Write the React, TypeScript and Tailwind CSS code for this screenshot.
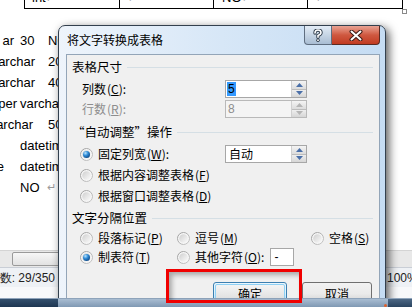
import React from "react";

const cjk = "font-['Noto_Sans_CJK_SC',sans-serif]";

function Radio({ checked }: { checked?: boolean }) {
  return (
    <svg width="13" height="13" viewBox="0 0 13 13" className="shrink-0">
      <defs>
        <linearGradient id="rOuter" x1="0" y1="0" x2="1" y2="1">
          <stop offset="0" stopColor="#9a9a9a" />
          <stop offset="1" stopColor="#c9c9c9" />
        </linearGradient>
        <linearGradient id="rInner" x1="0" y1="0" x2="1" y2="1">
          <stop offset="0" stopColor="#cfcfcf" />
          <stop offset="1" stopColor="#fbfbfb" />
        </linearGradient>
        <radialGradient id="rDot" cx="0.35" cy="0.3" r="0.8">
          <stop offset="0" stopColor="#b9e4ff" />
          <stop offset="0.45" stopColor="#2f8bd6" />
          <stop offset="1" stopColor="#0b3f7a" />
        </radialGradient>
      </defs>
      <circle cx="6.5" cy="6.5" r="6" fill="#f6f6f6" stroke="url(#rOuter)" />
      <circle cx="6.5" cy="6.5" r="4.3" fill="url(#rInner)" />
      {checked && <circle cx="6.5" cy="6.5" r="3.5" fill="url(#rDot)" />}
    </svg>
  );
}

function Spin({ disabled }: { disabled?: boolean }) {
  const arrow = disabled ? "#b5b5b5" : "#4a6fa8";
  return (
    <div className="flex flex-col w-[15px] h-full border-l border-[#d0d0d0]">
      <div className="flex-1 flex items-center justify-center bg-gradient-to-b from-[#f4f4f4] to-[#dcdcdc] border-b border-[#bcbcbc]">
        <svg width="7" height="4" viewBox="0 0 7 4">
          <path d="M0 4 L3.5 0 L7 4 Z" fill={arrow} />
        </svg>
      </div>
      <div className="flex-1 flex items-center justify-center bg-gradient-to-b from-[#eeeeee] to-[#d6d6d6]">
        <svg width="7" height="4" viewBox="0 0 7 4">
          <path d="M0 0 L3.5 4 L7 0 Z" fill={arrow} />
        </svg>
      </div>
    </div>
  );
}

function Key({ k }: { k: string }) {
  return (
    <span className="text-[12px] ml-[1px]">
      (<span className="underline underline-offset-1">{k}</span>)
    </span>
  );
}

function GroupHeader({ label }: { label: string }) {
  return (
    <div className="flex items-center h-[16px] pl-[5px] pr-[6px]">
      <span className="whitespace-nowrap text-[12.5px] leading-none">{label}</span>
      <div className="flex-1 h-px bg-[#d5dfe5] ml-[5px]" />
    </div>
  );
}

function Option({
  checked,
  label,
  k,
  colon,
}: {
  checked?: boolean;
  label: string;
  k: string;
  colon?: boolean;
}) {
  return (
    <div className="flex items-center gap-[5px] whitespace-nowrap">
      <Radio checked={checked} />
      <span className="text-[12px] leading-none">
        {label}
        <Key k={k} />
        {colon ? ":" : ""}
      </span>
    </div>
  );
}

function Dialog() {
  return (
    <div
      className={`absolute left-[58px] top-[25px] w-[328px] h-[282px] flex flex-col rounded-t-[7px] border border-[#33404e] bg-gradient-to-r from-[#eef4fb] via-[#d7e7f7] to-[#c5dcf3] shadow-[3px_3px_10px_rgba(0,0,0,0.65)] ${cjk} text-black`}
    >
      {/* title bar */}
      <div className="flex items-start justify-between h-[28px] shrink-0">
        <div className="pl-[8px] pt-[8px] text-[12px] leading-none">将文字转换成表格</div>
        <div className="flex mr-[5px]">
          <div className="w-[28px] h-[19px] flex items-center justify-center rounded-bl-[4px] border border-t-0 border-[#5f6e80] bg-gradient-to-b from-[#e3ecf6] via-[#c6d5e5] to-[#a9bdd3]">
            <svg width="10" height="13" viewBox="0 0 10 13">
              <path
                d="M2 4 Q2 1 5 1 Q8 1 8 3.6 Q8 5.6 5 6.6 L5 8.3"
                fill="none"
                stroke="#2d3a48"
                strokeWidth="3.4"
                strokeLinecap="round"
              />
              <path
                d="M2 4 Q2 1 5 1 Q8 1 8 3.6 Q8 5.6 5 6.6 L5 8.3"
                fill="none"
                stroke="#ffffff"
                strokeWidth="1.6"
                strokeLinecap="round"
              />
              <circle cx="5" cy="11.2" r="1.7" fill="#2d3a48" />
              <circle cx="5" cy="11.2" r="0.9" fill="#ffffff" />
            </svg>
          </div>
          <div className="w-[48px] h-[19px] flex items-center justify-center rounded-br-[4px] border border-t-0 border-l-0 border-[#5a2a22] bg-gradient-to-b from-[#e8a293] via-[#cf5840] to-[#c13a20]">
            <svg width="14" height="11" viewBox="0 0 14 11">
              <path d="M2.5 1.5 L11.5 9.5 M11.5 1.5 L2.5 9.5" stroke="#3a1a14" strokeWidth="4" strokeLinecap="round" />
              <path d="M2.5 1.5 L11.5 9.5 M11.5 1.5 L2.5 9.5" stroke="#ffffff" strokeWidth="2" strokeLinecap="round" />
            </svg>
          </div>
        </div>
      </div>

      {/* client area */}
      <div className="flex-1 ml-[7px] mr-[5px] border border-[#93a5b8] bg-[#f0f0f0] flex flex-col">
        <div className="mt-[4px]">
          <GroupHeader label="表格尺寸" />
        </div>

        <div className="flex items-center h-[18px] mt-[5px]">
          <span className="w-[158px] pl-[15px] text-[12px] leading-none whitespace-nowrap">
            列数<Key k="C" />:
          </span>
          <div className="w-[82px] h-full flex border border-[#a7a7a7] bg-white">
            <div className="flex-1 flex items-center pl-[1px]">
              <span className="bg-[#3399ff] text-[12px] leading-[14px] px-[1px] font-['Liberation_Sans',sans-serif]">5</span>
            </div>
            <Spin />
          </div>
        </div>

        <div className="flex items-center h-[18px] mt-[2px] text-[#8d8d8d]">
          <span className="w-[158px] pl-[15px] text-[12px] leading-none whitespace-nowrap">
            行数<Key k="R" />:
          </span>
          <div className="w-[82px] h-full flex border border-[#b9b9b9] bg-[#f4f4f4]">
            <div className="flex-1 flex items-center pl-[2px] text-[12px] font-['Liberation_Sans',sans-serif]">8</div>
            <Spin disabled />
          </div>
        </div>

        <div className="mt-[6px]">
          <GroupHeader label="“自动调整”操作" />
        </div>

        <div className="flex items-center h-[18px] mt-[5px]">
          <div className="w-[158px] pl-[13px]">
            <Option checked label="固定列宽" k="W" colon />
          </div>
          <div className="w-[82px] h-full flex border border-[#a7a7a7] bg-white">
            <div className="flex-1 flex items-center pl-[3px] text-[12px] leading-none">自动</div>
            <Spin />
          </div>
        </div>

        <div className="flex items-center h-[18px] mt-[3px] pl-[13px]">
          <Option label="根据内容调整表格" k="F" />
        </div>
        <div className="flex items-center h-[18px] mt-[3px] pl-[13px]">
          <Option label="根据窗口调整表格" k="D" />
        </div>

        <div className="mt-[5px]">
          <GroupHeader label="文字分隔位置" />
        </div>

        <div className="flex items-center h-[18px] mt-[3px] pl-[13px]">
          <div className="w-[97px]">
            <Option label="段落标记" k="P" />
          </div>
          <div className="w-[134px]">
            <Option label="逗号" k="M" />
          </div>
          <Option label="空格" k="S" />
        </div>

        <div className="flex items-center h-[18px] mt-[1px] pl-[13px]">
          <div className="w-[97px]">
            <Option checked label="制表符" k="T" />
          </div>
          <Option label="其他字符" k="O" colon />
          <div className="ml-[6px] w-[24px] h-[18px] border border-[#a7a7a7] bg-white flex items-center pl-[3px] text-[12px] font-['Liberation_Sans',sans-serif]">
            -
          </div>
        </div>

        <div className="flex justify-end gap-[15px] mt-[16px] mr-[7px]">
          <div className="w-[74px] h-[23px] rounded-[3px] border border-[#3c7fb1] bg-gradient-to-b from-[#eaf6fd] via-[#d9f0fc] to-[#a7d9f5] p-[1px]">
            <div className="h-full rounded-[2px] border border-[#8fd0f4] bg-gradient-to-b from-[#f4f4f4] to-[#dcdcdc] flex items-center justify-center text-[12px] leading-none">
              确定
            </div>
          </div>
          <div className="w-[70px] h-[23px] rounded-[3px] border border-[#707070] bg-gradient-to-b from-[#f2f2f2] via-[#ebebeb] to-[#cfcfcf] flex items-center justify-center text-[12px] leading-none">
            取消
          </div>
        </div>
      </div>
    </div>
  );
}

export default function App() {
  return (
    <div className="relative w-[412px] h-[307px] overflow-hidden bg-white font-['Liberation_Sans',sans-serif] text-[13px] text-black">
      <div className="flex flex-col h-full">
        {/* table row, mostly scrolled off */}
        <div className="flex -mt-[10px] h-[19px] ml-[24px] w-[379px] border-b border-black shrink-0">
          <div className="w-[95px] border-l border-black pl-[7px] leading-[16px]">
            int<span className="text-[#9a9a9a] text-[10px]">↵</span>
          </div>
          <div className="w-[94px] border-l border-black pl-[8px] leading-[16px]">
            <span className="text-[#9a9a9a] text-[10px]">↵</span>
          </div>
          <div className="w-[94px] border-l border-black pl-[8px] leading-[16px]">
            NO<span className="text-[#9a9a9a] text-[10px]">↵</span>
          </div>
          <div className="w-[96px] border-x border-black pl-[8px] leading-[16px]">
            <span className="text-[#9a9a9a] text-[10px]">↵</span>
          </div>
        </div>

        {/* document text */}
        <div className="flex flex-col mt-[21px] whitespace-nowrap">
          <div className="flex items-center h-[21px]">
            <div className="w-[14px] flex justify-end">ar</div>
            <div className="ml-[6px] w-[28px]">30</div>
            <div>NO</div>
          </div>
          <div className="flex items-center h-[21px]">
            <div className="w-[35px] flex justify-end">varchar</div>
            <div className="ml-[13px]">20</div>
          </div>
          <div className="flex items-center h-[21px]">
            <div className="w-[35px] flex justify-end">varchar</div>
            <div className="ml-[13px]">40</div>
          </div>
          <div className="flex items-center h-[21px]">
            <div className="w-[17px] flex justify-end">per</div>
            <div className="ml-[3px]">varchar</div>
          </div>
          <div className="flex items-center h-[21px]">
            <div className="w-[33px] flex justify-end">archar</div>
            <div className="ml-[15px]">50</div>
          </div>
          <div className="flex items-center h-[21px]">
            <div className="ml-[20px]">datetime</div>
          </div>
          <div className="flex items-center h-[21px]">
            <div className="w-[4px] flex justify-end">e</div>
            <div className="ml-[16px]">datetime</div>
          </div>
          <div className="flex items-center h-[21px]">
            <div className="ml-[20px] w-[27px]">NO</div>
            <div className="text-[#9a9a9a] text-[11px]">↵</div>
          </div>
        </div>

        <div className="flex-1" />

        {/* horizontal scrollbar */}
        <div className="h-[17px] shrink-0 bg-[#e8e8e8] border-t border-[#d4d4d4] flex items-center">
          <div className="ml-[12px] w-[120px] h-[14px] rounded-[2px] border border-[#9a9a9a] bg-gradient-to-b from-[#f7f7f7] to-[#e2e2e2]" />
        </div>

        {/* status bar */}
        <div className="h-[20px] shrink-0 flex items-center bg-[#eef1f5] border-t border-[#c9ced6] text-[12px] text-[#222]">
          <div className="w-[55px] flex justify-end whitespace-nowrap">字数: 29/350</div>
          <div className="ml-[332px] whitespace-nowrap">100%</div>
        </div>
        <div className="h-[11px] shrink-0 bg-[#f7f8fa]" />

        {/* taskbar */}
        <div className="h-[9px] shrink-0 flex border-t border-[#8ea3ba]">
          <div className="w-[58px] bg-gradient-to-b from-[#34506e] to-[#1d3652]" />
          <div className="w-[328px] bg-gradient-to-b from-[#a7bbd0] to-[#7f98b3]" />
          <div className="flex-1 bg-gradient-to-b from-[#4d6885] to-[#2a4460]" />
        </div>
      </div>

      {/* table resize handle */}
      <div className="absolute left-[402px] top-[9px] w-[5px] h-[5px] border border-[#8a8a8a] bg-white" />

      <Dialog />

      {/* taskbar over the dialog's bottom edge */}
      <div className="absolute left-0 top-[298px] w-[412px] h-[9px] flex border-t border-[#8ea3ba]">
        <div className="w-[58px] bg-gradient-to-b from-[#34506e] to-[#1d3652]" />
        <div className="w-[330px] bg-gradient-to-b from-[#a9bdd2] to-[#7f98b3]" />
        <div className="flex-1 bg-gradient-to-b from-[#4d6885] to-[#2a4460] flex justify-center">
          <div className="w-[3px] h-[3px] mt-[5px] -ml-[30px] rounded-full bg-[#e0602a]" />
        </div>
      </div>

      {/* annotation box */}
      <div className="absolute left-[166px] top-[269px] w-[136px] h-[34px] border-[3px] border-[#f00000] shadow-[inset_3px_3px_5px_rgba(0,0,0,0.3)]" />
    </div>
  );
}
